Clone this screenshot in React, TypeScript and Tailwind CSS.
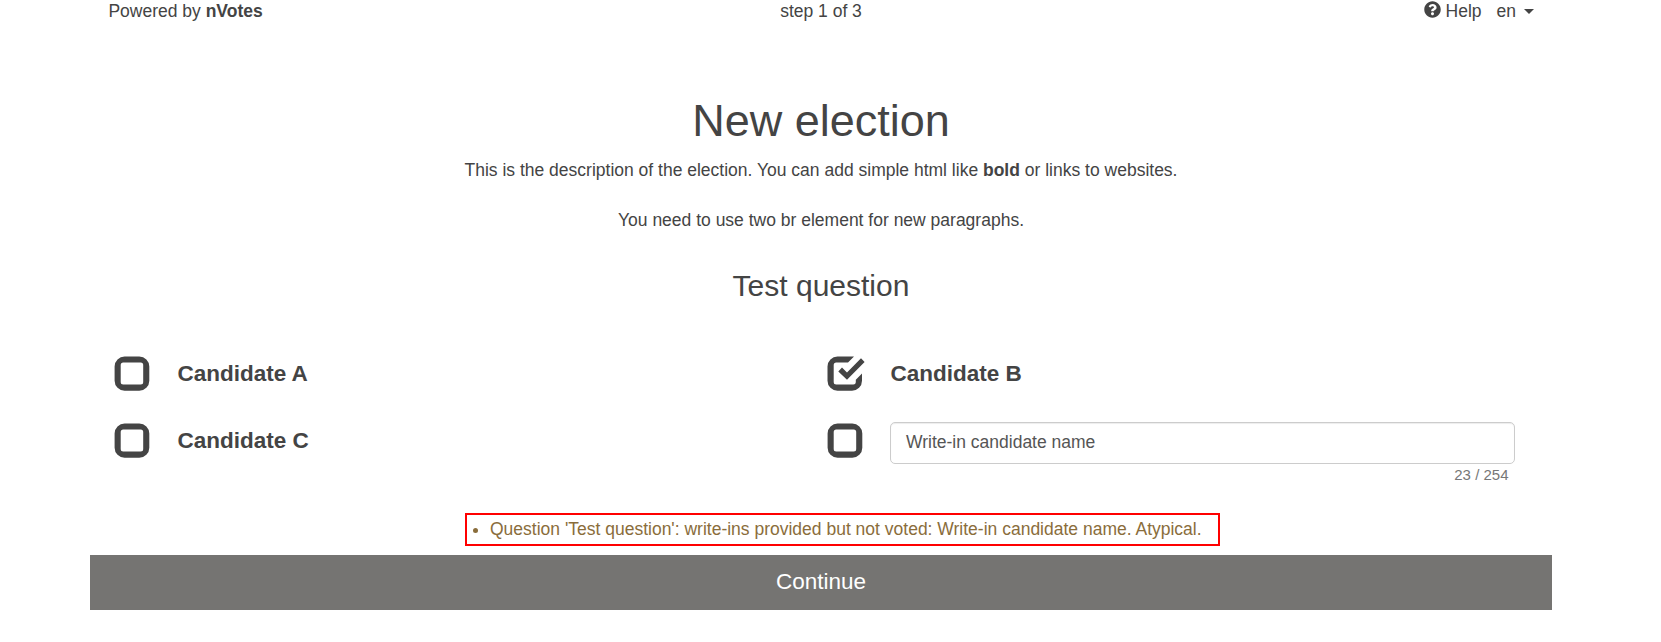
import { FaQuestionCircle } from "react-icons/fa";

function Box({ checked = false }: { checked?: boolean }) {
  return (
    <svg className="mt-[-1px] h-[38px] w-[40px] shrink-0" viewBox="0 0 40 38">
      {checked ? (
        <g fill="#444">
          <path d="M27 .5H10.500A10 10 0 0 0 .5 10.500V24.700A10 10 0 0 0 10.500 34.700H25A10 10 0 0 0 35 24.700V17.500L28.800 23.700V26.200A2.500 2.500 0 0 1 26.300 28.600H9.200A2.500 2.500 0 0 1 6.700 26.100V9A2.500 2.500 0 0 1 9.200 6.500H21Z" />
          <path d="M11.300 15.500L15 11.600L20 16.500L34 2.200L37.600 6L20 23.800Z" />
        </g>
      ) : (
        <path
          d="M10.600 .5H25.300A10 10 0 0 1 35.300 10.500V24.700A10 10 0 0 1 25.300 34.700H10.600A10 10 0 0 1 .6 24.700V10.500A10 10 0 0 1 10.600 .5ZM9.200 6.500A2.500 2.500 0 0 0 6.700 9V26.100A2.500 2.500 0 0 0 9.200 28.600H26.700A2.500 2.500 0 0 0 29.200 26.100V9A2.500 2.500 0 0 0 26.700 6.500Z"
          fill="#444"
          fillRule="evenodd"
        />
      )}
    </svg>
  );
}

function Candidate({ name, checked }: { name: string; checked?: boolean }) {
  return (
    <div className="flex h-[36px] items-start">
      <Box checked={checked} />
      <span className="ml-[23.4px] text-[22.5px] leading-[34px] font-bold">{name}</span>
    </div>
  );
}

export default function App() {
  return (
    <main className="h-[642px] overflow-hidden bg-white pl-[90px] font-['Liberation_Sans',Arial,sans-serif] text-[17.5px] leading-[25px] text-[#444]">
      <div className="w-[1462px]">
        <header className="grid h-[93px] grid-cols-3 px-[18px] leading-[23px]">
          <div className="pl-[0.4px]">Powered by <b>nVotes</b></div>
          <div className="text-center">step 1 of 3</div>
          <div className="flex justify-end">
            <FaQuestionCircle className="mt-[1px] mr-[5px] size-[17px]" />
            <span>Help</span>
            <span className="ml-[15px]">en</span>
            <span className="mt-[9px] ml-[8px] h-0 border-x-[5px] border-t-[5px] border-x-transparent border-t-[#444]" />
          </div>
        </header>
        <h1 className="text-center text-[45px] leading-[56px]">New election</h1>
        <div className="mt-[9px] text-center leading-[25px]">
          This is the description of the election. You can add simple html like <b>bold</b> or links to websites.<br /><br />
          You need to use two br element for new paragraphs.
        </div>
        <h2 className="mt-[35px] text-center text-[30px] leading-[36px]">Test question</h2>
        <section className="mt-[53px] grid h-[156px] grid-cols-[713px_1fr] grid-rows-[67px_89px] pl-[24px]">
          <Candidate name="Candidate A" />
          <Candidate name="Candidate B" checked />
          <Candidate name="Candidate C" />
          <div className="flex items-start">
            <Box />
            <div className="ml-[23px]">
              <div className="-mt-[2px] flex h-[42px] w-[625px] items-center rounded-[5px] border border-[#ccc] px-[15px] pb-[2px] text-[#555] shadow-[inset_0_1px_1px_rgba(0,0,0,0.075)]">Write-in candidate name</div>
              <div className="pr-[6.5px] text-right text-[15px] leading-[22px] text-[#777]">23 / 254</div>
            </div>
          </div>
        </section>
        <div className="ml-[375px] flex h-[33px] w-[755px] items-center border-2 border-[#ff0000] text-[#8a6d3b]">
          <span className="mt-[2px] ml-[6px] size-[5px] rounded-full bg-[#8a6d3b]" />
          <span className="ml-[12px] whitespace-nowrap">Question 'Test question': write-ins provided but not voted: Write-in candidate name. Atypical.</span>
        </div>
        <button className="mt-[9px] block h-[55px] w-full bg-[#757472] pb-[2px] text-[22.5px] text-white">Continue</button>
      </div>
    </main>
  );
}
